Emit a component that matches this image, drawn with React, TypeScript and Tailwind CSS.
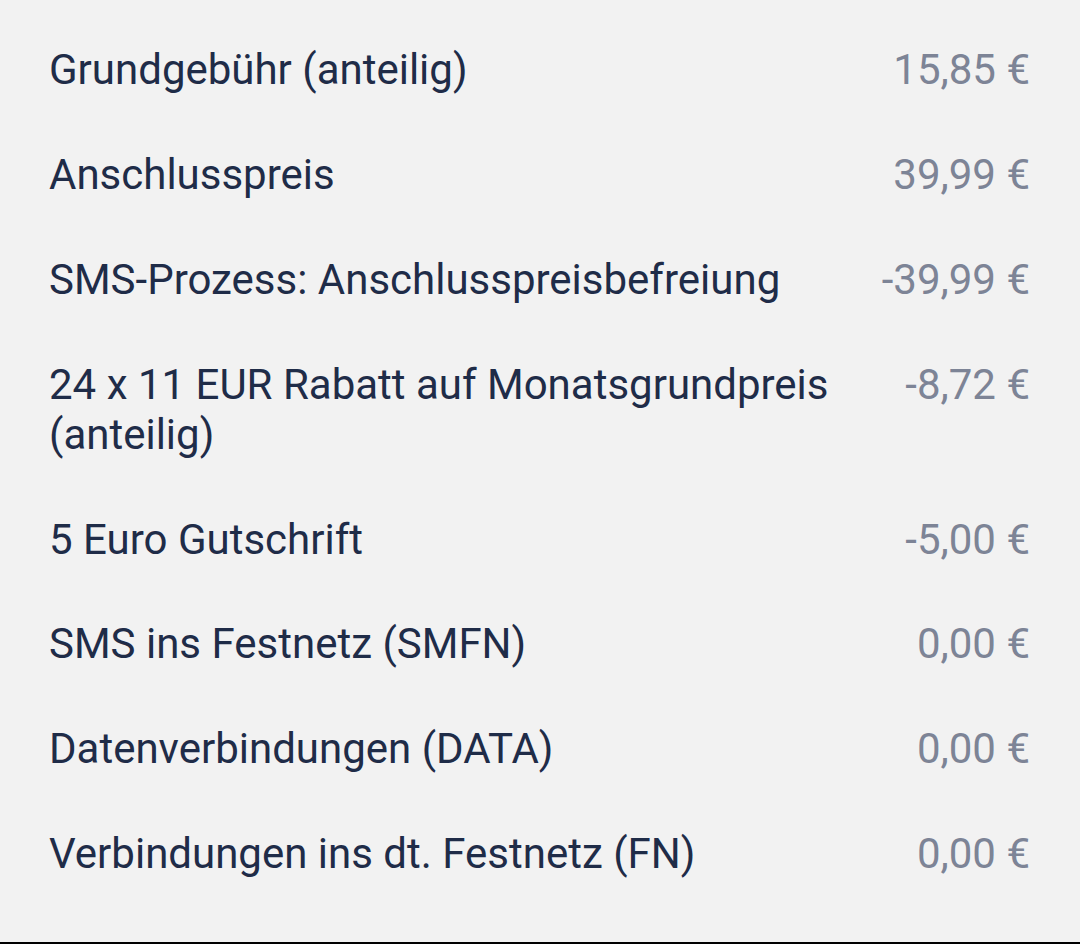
const rows: { label: string; amount: string }[] = [
  { label: "Grundgebühr (anteilig)", amount: "15,85 €" },
  { label: "Anschlusspreis", amount: "39,99 €" },
  { label: "SMS-Prozess: Anschlusspreisbefreiung", amount: "-39,99 €" },
  { label: "24 x 11 EUR Rabatt auf Monatsgrundpreis (anteilig)", amount: "-8,72 €" },
  { label: "5 Euro Gutschrift", amount: "-5,00 €" },
  { label: "SMS ins Festnetz (SMFN)", amount: "0,00 €" },
  { label: "Datenverbindungen (DATA)", amount: "0,00 €" },
  { label: "Verbindungen ins dt. Festnetz (FN)", amount: "0,00 €" },
];

export default function App() {
  return (
    <div
      className="flex h-[944px] w-[1080px] flex-col bg-[#f2f2f2]"
      style={{ fontFamily: "Roboto, 'Noto Sans', sans-serif" }}
    >
      <div className="flex-1 px-[49px] pt-[18px]">
        {rows.map((row, i) => (
          <div key={i} className="flex items-start justify-between gap-10 py-[27.4px] text-[42px] leading-[50px]">
            <span className="max-w-[800px] text-[#1f2c48]">{row.label}</span>
            <span className="whitespace-nowrap pr-[1px] text-[#7d8496]">{row.amount}</span>
          </div>
        ))}
      </div>
      <div className="h-[2px] bg-black" />
    </div>
  );
}
